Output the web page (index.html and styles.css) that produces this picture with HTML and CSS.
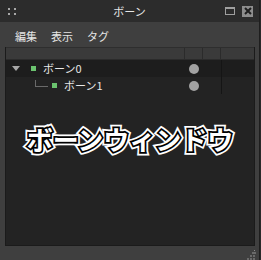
FILE: index.html
```html
<!DOCTYPE html>
<html lang="ja">
<head>
<meta charset="utf-8">
<link rel="stylesheet" href="styles.css">
</head>
<body>
<div class="window">
  <div class="titlebar">
    <div class="grip">
      <span></span><span></span><span></span><span></span>
    </div>
    <div class="title">ボーン</div>
    <div class="tbtns">
      <div class="maxbtn"></div>
      <div class="closebtn">
        <svg width="10" height="10" viewBox="0 0 10 10"><path d="M2 2 L8 8 M8 2 L2 8" stroke="#1e1e1e" stroke-width="2"/></svg>
      </div>
    </div>
  </div>
  <div class="menubar">
    <span class="menu">編集</span>
    <span class="menu">表示</span>
    <span class="menu">タグ</span>
  </div>
  <div class="panel">
    <div class="header">
      <div class="hc name"></div>
      <div class="hc c1"></div>
      <div class="hc c2"></div>
      <div class="hc c3"></div>
    </div>
    <div class="row r0">
      <div class="cell name">
        <span class="tri"></span>
        <span class="sq"></span>
        <span class="label">ボーン0</span>
      </div>
      <div class="cell c1"><span class="dot"></span></div>
      <div class="cell c2"></div>
      <div class="cell c3"></div>
    </div>
    <div class="row r1">
      <div class="cell name">
        <span class="conn"></span>
        <span class="sq"></span>
        <span class="label">ボーン1</span>
      </div>
      <div class="cell c1"><span class="dot"></span></div>
      <div class="cell c2"></div>
      <div class="cell c3"></div>
    </div>
    <div class="caption">
      <span class="cap-back" aria-hidden="true">ボーンウィンドウ</span>
      <span class="cap-front">ボーンウィンドウ</span>
    </div>
  </div>
  <div class="footer">
    <svg class="resize" width="11" height="11" viewBox="0 0 11 11">
      <rect x="9" y="1" width="1" height="1" fill="#8a8a8a"/>
      <rect x="7" y="3" width="2" height="2" fill="#6a6a6a"/>
      <rect x="9" y="3" width="2" height="2" fill="#6a6a6a"/>
      <rect x="5" y="6" width="2" height="2" fill="#6a6a6a"/>
      <rect x="8" y="6" width="2" height="2" fill="#6a6a6a"/>
      <rect x="2" y="9" width="2" height="2" fill="#6a6a6a"/>
      <rect x="5" y="9" width="2" height="2" fill="#6a6a6a"/>
      <rect x="8" y="9" width="2" height="2" fill="#6a6a6a"/>
    </svg>
  </div>
</div>
</body>
</html>
```

FILE: styles.css
```css
html, body {
  margin: 0;
  padding: 0;
}
body {
  background: #2a2a2a;
  width: 261px;
  height: 260px;
  overflow: hidden;
  font-family: "Noto Sans CJK JP", "Noto Sans", sans-serif;
}
.window {
  width: 259px;
  height: 260px;
  background: #3f3f3f;
  display: flex;
  flex-direction: column;
  border-right: 1px solid #1e1e1e;
}
.titlebar {
  height: 22px;
  background: #2c2c2c;
  display: flex;
  align-items: center;
  position: relative;
  flex: none;
}
.grip {
  width: 6px;
  height: 7px;
  margin-left: 8px;
  display: grid;
  grid-template-columns: 2px 2px;
  grid-template-rows: 2px 2px;
  column-gap: 4px;
  row-gap: 3px;
}
.grip span {
  background: #a8a8a8;
  width: 2px;
  height: 2px;
}
.title {
  position: absolute;
  left: 0;
  right: 0;
  text-align: center;
  color: #e6e6e6;
  font-size: 11px;
  line-height: 22px;
  top: 0;
}
.tbtns {
  margin-left: auto;
  display: flex;
  align-items: center;
  gap: 7px;
  margin-right: 6px;
}
.maxbtn {
  width: 8px;
  height: 5px;
  border: 1px solid #a0a0a0;
  border-top-width: 2px;
}
.closebtn {
  width: 11px;
  height: 11px;
  background: #8d8d8d;
  display: flex;
  align-items: center;
  justify-content: center;
}
.menubar {
  height: 25px;
  display: flex;
  align-items: center;
  gap: 14px;
  padding-left: 15px;
  flex: none;
}
.menu {
  color: #e6e6e6;
  font-size: 11px;
  line-height: 14px;
  margin-top: 2px;
}
.panel {
  margin-left: 5px;
  margin-right: 4px;
  height: 199px;
  background: #232323;
  border: 1px solid #1b1b1b;
  border-top: none;
  box-sizing: border-box;
  flex: none;
  display: flex;
  flex-direction: column;
}
.header {
  display: flex;
  height: 13px;
  background: #3a3a3a;
  border-top: 1px solid #2e2e2e;
  border-bottom: 1px solid #2b2b2b;
  box-sizing: border-box;
}
.hc {
  border-right: 1px solid #2b2b2b;
  box-sizing: border-box;
}
.name { width: 179px; }
.c1 { width: 18px; }
.c2 { width: 18px; }
.c3 { flex: 1; border-right: none; }
.row {
  display: flex;
  height: 17px;
}
.r0 { background: #1d1d1d; }
.r1 { background: #232323; }
.cell {
  box-sizing: border-box;
  display: flex;
  align-items: center;
}
.cell.c1 {
  justify-content: center;
  width: 18px;
}
.cell.c2 { width: 18px; }
.cell.c3 {
  border-left: 1px solid #151515;
}
.tri {
  width: 0;
  height: 0;
  border-left: 4px solid transparent;
  border-right: 4px solid transparent;
  border-top: 5px solid #a8a8a8;
  margin-left: 6px;
  margin-right: 11px;
}
.sq {
  width: 5px;
  height: 5px;
  background: #6bc36f;
  margin-right: 7px;
}
.label {
  color: #e8e8e8;
  font-size: 11px;
  line-height: 15px;
}
.conn {
  width: 12px;
  height: 6px;
  border-left: 1px solid #6a6a6a;
  border-bottom: 1px solid #6a6a6a;
  margin-left: 29px;
  margin-right: 4px;
  margin-top: -5px;
}
.dot {
  width: 10px;
  height: 10px;
  border-radius: 50%;
  background: #a3a3a3;
}
.caption {
  margin-top: 28px;
  display: grid;
  justify-items: center;
  font-size: 26px;
  font-weight: 700;
  line-height: 34px;
}
.cap-back, .cap-front {
  grid-area: 1 / 1;
  white-space: nowrap;
}
.cap-back {
  color: #fff;
  -webkit-text-stroke: 7px #fff;
}
.cap-front {
  color: #fff;
  -webkit-text-stroke: 3.5px #000;
  paint-order: stroke fill;
}
.footer {
  flex: 1;
  position: relative;
}
.resize {
  position: absolute;
  right: 3px;
  bottom: 0;
}
```
